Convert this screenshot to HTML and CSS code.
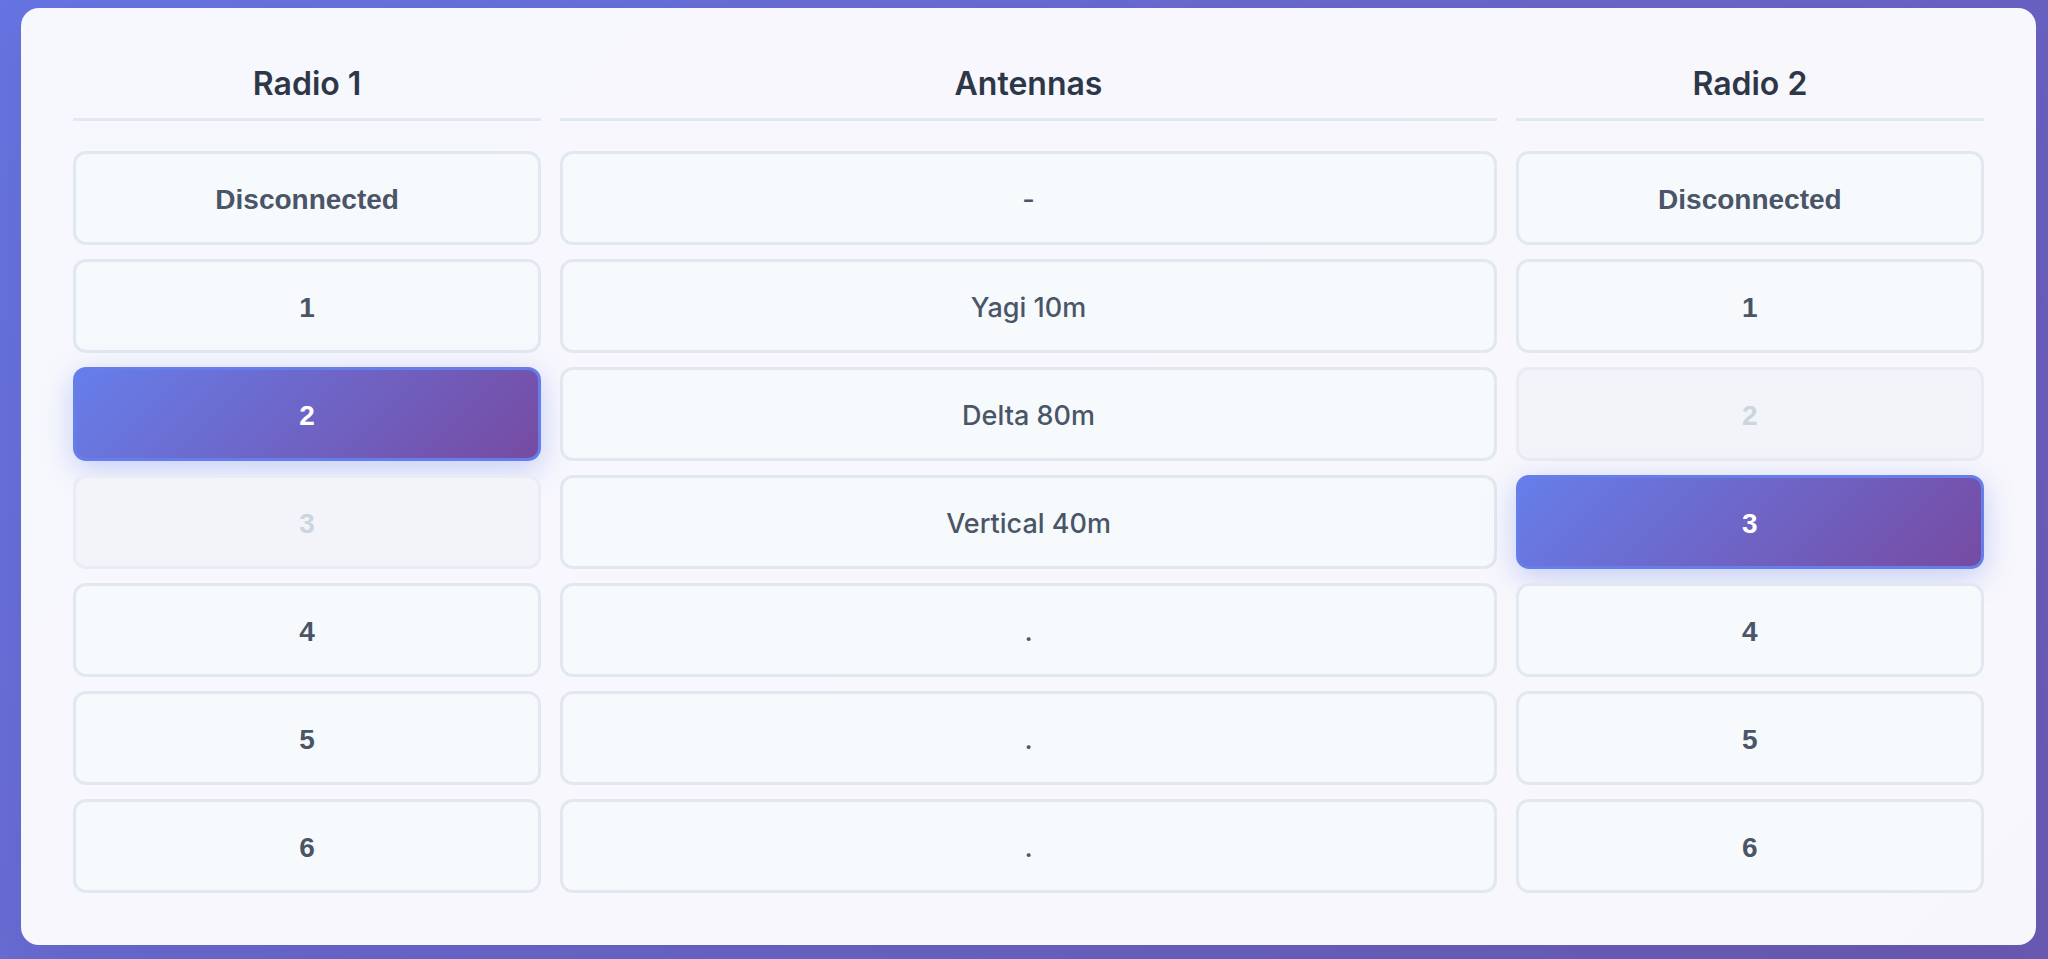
FILE: index.html
```html
<!DOCTYPE html>
<html lang="en">
<head>
<meta charset="utf-8">
<title>Antenna Switch</title>
<link rel="stylesheet" href="styles.css">
</head>
<body>
  <main class="panel">
    <div class="grid">
      <section class="col">
        <h2 class="col-title">Radio 1</h2>
        <div class="list">
          <button class="opt">Disconnected</button>
          <button class="opt">1</button>
          <button class="opt active">2</button>
          <button class="opt disabled">3</button>
          <button class="opt">4</button>
          <button class="opt">5</button>
          <button class="opt">6</button>
        </div>
      </section>
      <section class="col">
        <h2 class="col-title">Antennas</h2>
        <div class="list">
          <div class="opt antenna">-</div>
          <div class="opt antenna">Yagi 10m</div>
          <div class="opt antenna">Delta 80m</div>
          <div class="opt antenna">Vertical 40m</div>
          <div class="opt antenna">.</div>
          <div class="opt antenna">.</div>
          <div class="opt antenna">.</div>
        </div>
      </section>
      <section class="col">
        <h2 class="col-title">Radio 2</h2>
        <div class="list">
          <button class="opt">Disconnected</button>
          <button class="opt">1</button>
          <button class="opt disabled">2</button>
          <button class="opt active">3</button>
          <button class="opt">4</button>
          <button class="opt">5</button>
          <button class="opt">6</button>
        </div>
      </section>
    </div>
  </main>
</body>
</html>
```

FILE: styles.css
```css
* { box-sizing: border-box; }

html, body { height: 100%; }

body {
  margin: 0;
  padding: 8px 12px 14px 21px;
  font-family: Inter, "Liberation Sans", sans-serif;
  background: linear-gradient(135deg, #6674e2 0%, #6967cc 45%, #6a5ab4 100%);
}

.panel {
  background: rgba(255, 255, 255, 0.95);
  border-radius: 18px;
  padding: 56px 52px 52px;
  box-shadow: 0 20px 60px rgba(0, 0, 0, 0.06);
}

.grid {
  display: grid;
  grid-template-columns: 1fr 2fr 1fr;
  gap: 19px;
}

.col {
  display: flex;
  flex-direction: column;
}

.col-title {
  margin: 0 0 30px;
  padding: 1px 0 15px;
  border-bottom: 3px solid #e2e8f0;
  text-align: center;
  font-size: 32px;
  line-height: 1.2;
  font-weight: 600;
  color: #2d3748;
}

.list {
  display: flex;
  flex-direction: column;
  gap: 14px;
}

.opt {
  display: flex;
  align-items: center;
  justify-content: center;
  height: 94px;
  margin: 0;
  padding: 3px 0 0;
  border: 3px solid #e2e8f0;
  border-radius: 13px;
  background: #f7fafc;
  font-family: "Liberation Sans", Arial, sans-serif;
  font-size: 28px;
  font-weight: 700;
  color: #4a5568;
  cursor: pointer;
}

.opt.antenna {
  font-family: Inter, "Liberation Sans", sans-serif;
  font-size: 27px;
  font-weight: 500;
  cursor: default;
}

.opt.active {
  background: linear-gradient(135deg, #667eea 0%, #764ba2 100%);
  border-color: #667eea;
  color: #ffffff;
  box-shadow: 0 8px 30px rgba(102, 126, 234, 0.35);
}

.opt.disabled {
  background: #f2f4f9;
  border-color: #e9ecf2;
  color: #cbd5e0;
  cursor: not-allowed;
}
```
